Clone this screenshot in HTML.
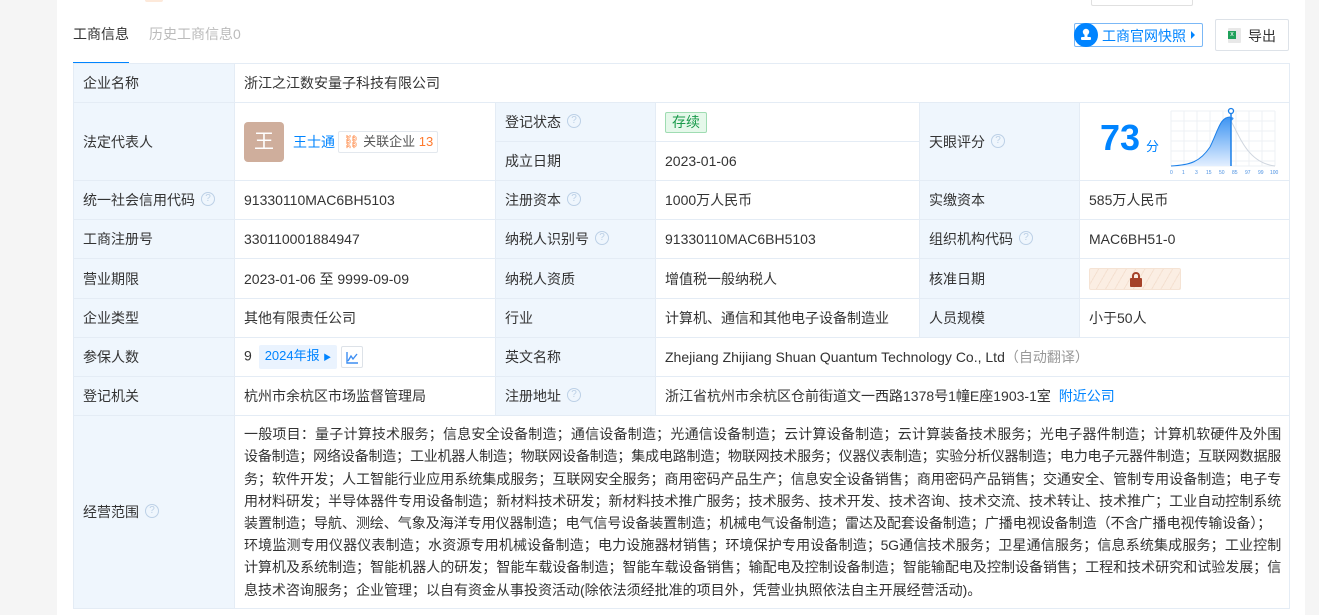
<!DOCTYPE html>
<html><head><meta charset="utf-8">
<style>
*{margin:0;padding:0;box-sizing:border-box}
body{width:1319px;height:615px;overflow:hidden;background:#f5f5f5;font-family:"Liberation Sans","Noto Sans CJK SC",sans-serif;font-size:14px;color:#333;position:relative}
.panel{position:absolute;left:57px;top:0;width:1248px;height:615px;background:#fff}
.tabs{position:absolute;left:73px;top:24px;font-size:14px}
.tab1{position:absolute;left:0;top:0;color:#333;white-space:nowrap}
.tab1:after{content:"";position:absolute;left:0;right:0;top:38px;height:3px;background:#0084ff}
.tab2{position:absolute;left:76px;top:0;color:#bbb;white-space:nowrap}
table{position:absolute;left:73px;top:63px;border-collapse:collapse;table-layout:fixed;width:1216px}
td{border:1px solid #e4ecf5;padding:0 9px;white-space:nowrap;vertical-align:middle;line-height:20px}
td.l{background:#eff6fd}
.q{display:inline-block;width:14px;height:14px;border:1px solid #bcd0e6;border-radius:50%;color:#bcd0e6;font-size:10px;line-height:12px;text-align:center;margin-left:6px;vertical-align:middle;position:relative;top:-2px}
a{color:#0084ff;text-decoration:none}
.scope{line-height:22.2px;padding:6px 9px}
.scope div{width:1037px;text-align:justify;text-align-last:justify;letter-spacing:-0.3px;white-space:nowrap}
.scope div.last{text-align-last:left;letter-spacing:0}
</style></head><body>
<div class="panel"></div>
<div style="position:absolute;left:1091px;top:-10px;width:102px;height:16px;border:1px solid #e0e0e0;border-radius:2px;background:#fff"></div>
<div style="position:absolute;left:145px;top:-4px;width:18px;height:6px;background:#fde9da;border-radius:2px"></div>
<div class="tabs"><span class="tab1">工商信息</span><span class="tab2">历史工商信息0</span></div>
<div style="position:absolute;left:1074px;top:23px;width:129px;height:24px;border:1px solid #7bb8f6;border-radius:2px;background:#fff"></div>
<div style="position:absolute;left:1074px;top:23px;width:24px;height:24px;border-radius:50%;background:#0084ff"><svg width="24" height="24" viewBox="0 0 24 24"><circle cx="12" cy="9" r="3.2" fill="#fff"/><rect x="10.5" y="11" width="3" height="3" fill="#fff"/><rect x="7" y="14" width="10" height="3" rx="1" fill="#fff"/></svg></div>
<div style="position:absolute;left:1102px;top:26px;color:#0084ff;font-size:14px;white-space:nowrap">工商官网快照</div>
<div style="position:absolute;left:1191px;top:31px;width:0;height:0;border-left:4px solid #0084ff;border-top:4px solid transparent;border-bottom:4px solid transparent"></div>
<div style="position:absolute;left:1215px;top:19px;width:74px;height:32px;border:1px solid #dde2e8;border-radius:2px;background:#fff"></div>
<div style="position:absolute;left:1228px;top:28px;width:13px;height:15px;background:#e8e8e8;border-radius:1px"><div style="position:absolute;left:0;top:3px;width:8px;height:8px;background:#1fa15a;color:#fff;font-size:7px;line-height:8px;text-align:center">x</div></div>
<div style="position:absolute;left:1248px;top:26px;font-size:14px">导出</div>
<table>
<colgroup><col style="width:161px"><col style="width:261px"><col style="width:160px"><col style="width:264px"><col style="width:160px"><col style="width:210px"></colgroup>
<tr style="height:39px"><td class="l">企业名称</td><td colspan="5">浙江之江数安量子科技有限公司</td></tr>
<tr style="height:39px"><td class="l" rowspan="2">法定代表人</td><td rowspan="2"><div style="display:flex;align-items:center"><div style="width:40px;height:40px;background:#cfae9c;border-radius:4px;color:#fff;font-size:20px;text-align:center;line-height:40px">王</div><a style="margin-left:9px">王士通</a><span style="margin-left:3px;border:1px solid #e3e8ee;border-radius:2px;padding:0 4px;font-size:13px;color:#555"><span style="color:#ff7a2e">⛓</span> 关联企业 <span style="color:#ff7a2e">13</span></span></div></td><td class="l">登记状态<span class="q">?</span></td><td><span style="display:inline-block;background:#e5f8ea;border:1px solid #9fdcb2;color:#1a9a4b;padding:0 6px;border-radius:2px;line-height:19px">存续</span></td><td class="l" rowspan="2">天眼评分<span class="q">?</span></td><td rowspan="2" style="padding:0"><div style="position:relative;height:77px">
<div style="position:absolute;left:20px;top:15px;font-size:36px;line-height:40px;font-weight:bold;color:#0084ff;font-family:'Liberation Sans',sans-serif">73</div>
<div style="position:absolute;left:66px;top:34px;font-size:13px;color:#0084ff">分</div>
<svg style="position:absolute;left:90px;top:4px" width="110" height="70" viewBox="0 0 110 70">
<g stroke="#edf0f4" stroke-width="1" fill="none"><path d="M1 4H105M1 14H105M1 24H105M1 34H105M1 44H105M1 54H105M1 59H105M1 4V59M14 4V59M27 4V59M40 4V59M53 4V59M66 4V59M79 4V59M92 4V59M105 4V59"/></g>
<defs><linearGradient id="g" x1="0" y1="0" x2="0" y2="1"><stop offset="0" stop-color="#3d94f2"/><stop offset="1" stop-color="#e3efff"/></linearGradient></defs>
<path d="M1 59C20 58 30 55 40 40C48 24 50 10 60 10C64 10 65 12 61 14V59Z" fill="url(#g)"/>
<path d="M1 59C20 58 30 55 40 40C48 24 50 10 60 10" stroke="#1a7fe8" fill="none"/>
<path d="M61 14C70 30 78 56 105 59" stroke="#cfd6df" fill="none"/>
<line x1="61" y1="5" x2="61" y2="59" stroke="#1a7fe8" stroke-width="1.5"/>
<circle cx="61" cy="4" r="2.5" fill="#fff" stroke="#1a7fe8" stroke-width="1.3"/>
<g font-size="5" fill="#4a90e2" font-family="Liberation Sans"><text x="0" y="67">0</text><text x="12" y="67">1</text><text x="25" y="67">3</text><text x="36" y="67">15</text><text x="49" y="67">50</text><text x="62" y="67">85</text><text x="75" y="67">97</text><text x="88" y="67">99</text><text x="100" y="67">100</text></g>
</svg></div></td></tr>
<tr style="height:39px"><td class="l">成立日期</td><td>2023-01-06</td></tr>
<tr style="height:39px"><td class="l">统一社会信用代码<span class="q">?</span></td><td>91330110MAC6BH5103</td><td class="l">注册资本<span class="q">?</span></td><td>1000万人民币</td><td class="l">实缴资本</td><td>585万人民币</td></tr>
<tr style="height:39px"><td class="l">工商注册号</td><td>330110001884947</td><td class="l">纳税人识别号<span class="q">?</span></td><td>91330110MAC6BH5103</td><td class="l">组织机构代码<span class="q">?</span></td><td>MAC6BH51-0</td></tr>
<tr style="height:40px"><td class="l">营业期限</td><td>2023-01-06 至 9999-09-09</td><td class="l">纳税人资质</td><td>增值税一般纳税人</td><td class="l">核准日期</td><td><div style="width:92px;height:22px;border:1px solid #f5e3d4;border-radius:2px;background:repeating-linear-gradient(120deg,#fbeee3 0 7px,#f4e0d0 7px 8px);position:relative"><div style="position:absolute;left:40px;top:9px;width:12px;height:9px;background:#a5422a;border-radius:1px"></div><div style="position:absolute;left:42px;top:3px;width:8px;height:8px;border:2px solid #a5422a;border-bottom:none;border-radius:4px 4px 0 0"></div></div></td></tr>
<tr style="height:39px"><td class="l">企业类型</td><td>其他有限责任公司</td><td class="l">行业</td><td>计算机、通信和其他电子设备制造业</td><td class="l">人员规模</td><td>小于50人</td></tr>
<tr style="height:39px"><td class="l">参保人数</td><td>9 <span style="display:inline-block;background:#eaf3fe;color:#0084ff;padding:0 6px;line-height:22px;border-radius:2px;margin-left:3px;font-size:13px;vertical-align:middle">2024年报 <span style="font-size:8px">▶</span></span> <span style="display:inline-block;width:22px;height:22px;border:1px solid #dde2e8;border-radius:2px;vertical-align:middle;text-align:center;line-height:20px"><svg width="14" height="14" viewBox="0 0 14 14" style="vertical-align:middle"><path d="M2 1V12H13M3 10L6 5L8 8L12 3" stroke="#3d8ef2" stroke-width="1.4" fill="none"/></svg></span></td><td class="l">英文名称</td><td colspan="3">Zhejiang Zhijiang Shuan Quantum Technology Co., Ltd<span style="color:#999">（自动翻译）</span></td></tr>
<tr style="height:39px"><td class="l">登记机关</td><td>杭州市余杭区市场监督管理局</td><td class="l">注册地址<span class="q">?</span></td><td colspan="3">浙江省杭州市余杭区仓前街道文一西路1378号1幢E座1903-1室 <a style="margin-left:4px">附近公司</a></td></tr>
<tr style="height:193px"><td class="l">经营范围<span class="q">?</span></td><td colspan="5" class="scope"><div>一般项目：量子计算技术服务；信息安全设备制造；通信设备制造；光通信设备制造；云计算设备制造；云计算装备技术服务；光电子器件制造；计算机软硬件及外围</div><div>设备制造；网络设备制造；工业机器人制造；物联网设备制造；集成电路制造；物联网技术服务；仪器仪表制造；实验分析仪器制造；电力电子元器件制造；互联网数据服</div><div>务；软件开发；人工智能行业应用系统集成服务；互联网安全服务；商用密码产品生产；信息安全设备销售；商用密码产品销售；交通安全、管制专用设备制造；电子专</div><div>用材料研发；半导体器件专用设备制造；新材料技术研发；新材料技术推广服务；技术服务、技术开发、技术咨询、技术交流、技术转让、技术推广；工业自动控制系统</div><div style="width:1027px">装置制造；导航、测绘、气象及海洋专用仪器制造；电气信号设备装置制造；机械电气设备制造；雷达及配套设备制造；广播电视设备制造（不含广播电视传输设备）；</div><div>环境监测专用仪器仪表制造；水资源专用机械设备制造；电力设施器材销售；环境保护专用设备制造；5G通信技术服务；卫星通信服务；信息系统集成服务；工业控制</div><div>计算机及系统制造；智能机器人的研发；智能车载设备制造；智能车载设备销售；输配电及控制设备制造；智能输配电及控制设备销售；工程和技术研究和试验发展；信</div><div class="last">息技术咨询服务；企业管理；以自有资金从事投资活动(除依法须经批准的项目外，凭营业执照依法自主开展经营活动)。</div></td></tr>
</table>
</body></html>
